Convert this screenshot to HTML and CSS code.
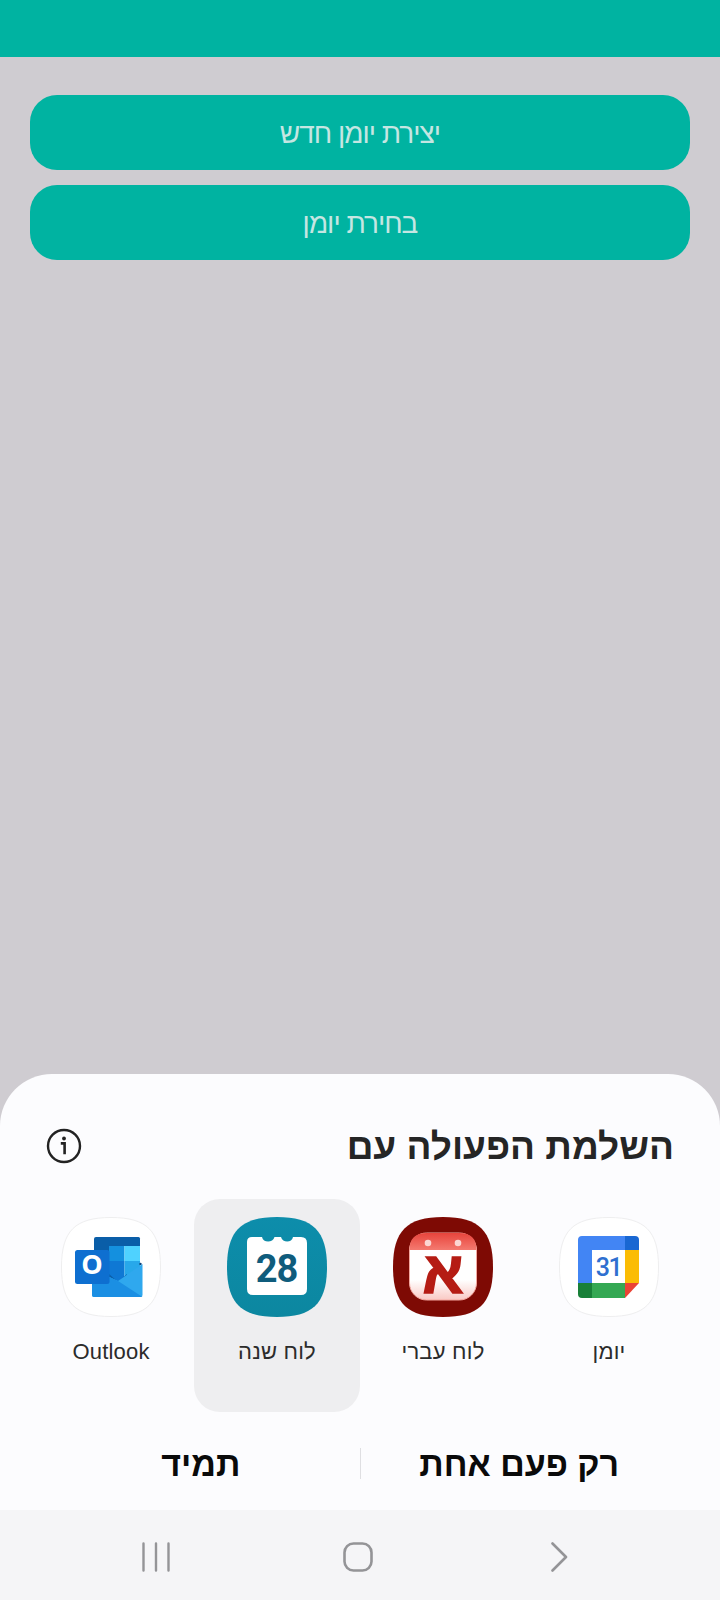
FILE: index.html
```html
<!DOCTYPE html>
<html lang="he" dir="rtl">
<head>
<meta charset="utf-8">
<title>השלמת הפעולה עם</title>
<link rel="stylesheet" href="styles.css">
</head>
<body>
<div class="screen">
  <header class="topbar"></header>
  <main class="content">
    <button class="action">יצירת יומן חדש</button>
    <button class="action">בחירת יומן</button>
  </main>
  <section class="sheet">
    <div class="sheet-head">
      <h1 class="title">השלמת הפעולה עם</h1>
      <svg class="info" viewBox="0 0 36 36" aria-hidden="true">
        <circle cx="18" cy="18" r="16" fill="none" stroke="#222" stroke-width="2.4"/>
        <circle cx="18" cy="10.5" r="1.9" fill="#222"/>
        <path d="M14.8 15.4H18.6V26.2" fill="none" stroke="#222" stroke-width="2.6"/>
      </svg>
    </div>
    <div class="apps">
      <div class="app">
        <svg class="icon" viewBox="0 0 100 100" aria-hidden="true">
          <path class="squircle-white" d="M50 .5C86 .5 99.500 14 99.500 50S86 99.500 50 99.500 .5 86 .5 50 14 .5 50 .5Z"/>
          <path fill="#4285f4" d="M23 19H66V33H33V66H19V23Q19 19 23 19Z"/>
          <path fill="#fff" d="M33 33H66V66H33Z"/>
          <path fill="#1967d2" d="M66 19H76Q80 19 80 23V33H66Z"/>
          <path fill="#fbbc04" d="M66 33H80V66H66Z"/>
          <path fill="#34a853" d="M33 66H66V81H33Z"/>
          <path fill="#188038" d="M19 66H33V81H23Q19 81 19 77Z"/>
          <path fill="#ea4335" d="M66 66H80L66 81Z"/>
          <text class="num31" x="49.500" y="58.500" text-anchor="middle" direction="ltr">31</text>
        </svg>
        <span class="label">יומן</span>
      </div>
      <div class="app">
        <svg class="icon" viewBox="0 0 100 100" aria-hidden="true">
          <defs>
            <linearGradient id="redTop" x1="0" y1="0" x2="0" y2="1">
              <stop offset="0" stop-color="#e8443c"/>
              <stop offset="1" stop-color="#f47a70"/>
            </linearGradient>
            <linearGradient id="paper" x1="0" y1="0" x2="0" y2="1">
              <stop offset="0" stop-color="#fff"/>
              <stop offset=".7" stop-color="#fff"/>
              <stop offset="1" stop-color="#f9c9c4"/>
            </linearGradient>
          </defs>
          <path fill="#7e0a04" d="M50 0C86 0 100 14 100 50S86 100 50 100 0 86 0 50 14 0 50 0Z"/>
          <rect class="paper" x="16.500" y="16" width="67" height="67" rx="17" fill="url(#paper)"/>
          <path fill="url(#redTop)" d="M33.500 16H66.500Q83.500 16 83.500 33H16.500Q16.500 16 33.500 16Z"/>
          <circle cx="35" cy="26" r="3.300" fill="#fbd6d2"/>
          <circle cx="65" cy="26" r="3.300" fill="#fbd6d2"/>
          <text class="aleph" x="50" y="76" text-anchor="middle">א</text>
        </svg>
        <span class="label">לוח עברי</span>
      </div>
      <div class="app selected">
        <svg class="icon" viewBox="0 0 100 100" aria-hidden="true">
          <defs>
            <linearGradient id="teal" x1="0" y1="0" x2="0" y2="1">
              <stop offset="0" stop-color="#0d8dab"/>
              <stop offset="1" stop-color="#0c87a0"/>
            </linearGradient>
          </defs>
          <path fill="url(#teal)" d="M50 0C86 0 100 14 100 50S86 100 50 100 0 86 0 50 14 0 50 0Z"/>
          <path fill="#fff" d="M25 20H35C36 26 46 26 47.500 20H54C55.500 26 65 26 66 20H74Q80 20 80 26V72Q80 78 74 78H26Q20 78 20 72V25Q20 20 25 20Z"/>
          <text class="num28" x="49.500" y="64.500" text-anchor="middle" direction="ltr">28</text>
        </svg>
        <span class="label">לוח שנה</span>
      </div>
      <div class="app">
        <svg class="icon" viewBox="0 0 100 100" aria-hidden="true">
          <path class="squircle-white" d="M50 .5C86 .5 99.500 14 99.500 50S86 99.500 50 99.500 .5 86 .5 50 14 .5 50 .5Z"/>
          <path fill="#0a5ea8" d="M35 20H77.500Q79 20 79 21.500V29H33V22Q33 20 35 20Z"/>
          <path fill="#0a5ea8" d="M33 29H48V70H33Z"/>
          <path fill="#1490df" d="M48 29H63.500V44H48Z"/>
          <path fill="#4fd2ff" d="M63.500 29H79V44H63.500Z"/>
          <path fill="#0f78d4" d="M48 44H63.500V70H48Z"/>
          <path fill="#28a8ea" d="M63.500 44H79V70H63.500Z"/>
          <path fill="#0a5ea8" d="M48 57L57 65 66 57V70H48Z"/>
          <circle cx="79.500" cy="47" r="1.200" fill="#0a3f78"/>
          <path fill="#2fa8ee" d="M57 64L81.500 47V78Q81.500 80 79.500 80H33Q31 80 31 78V52Z"/>
          <path fill="#1b8fe3" d="M31 52L57 64 81.500 80H33Q31 80 31 78Z"/>
          <rect x="14" y="33" width="34.500" height="34" rx="2.500" fill="#0e6fd0"/>
          <text class="letterO" x="31" y="57" text-anchor="middle" direction="ltr">O</text>
        </svg>
        <span class="label">Outlook</span>
      </div>
    </div>
    <div class="choices">
      <button class="choice">רק פעם אחת</button>
      <span class="divider"></span>
      <button class="choice">תמיד</button>
    </div>
  </section>
  <nav class="navbar" dir="ltr">
    <svg class="nav-icon" viewBox="0 0 32 30" aria-hidden="true">
      <path d="M3.500 1.500V28.500M16 1.500V28.500M28.500 1.500V28.500" fill="none" stroke="#949497" stroke-width="2.400" stroke-linecap="round"/>
    </svg>
    <svg class="nav-icon" viewBox="0 0 32 30" aria-hidden="true">
      <rect x="2.500" y="1.500" width="27" height="27" rx="9" fill="none" stroke="#949497" stroke-width="2.600"/>
    </svg>
    <svg class="nav-icon" viewBox="0 0 32 30" aria-hidden="true">
      <path d="M8.500 1.500L22 15 8.500 28.500" fill="none" stroke="#949497" stroke-width="2.600" stroke-linecap="round" stroke-linejoin="round"/>
    </svg>
  </nav>
</div>
</body>
</html>
```

FILE: styles.css
```css
* { box-sizing: border-box; }
html, body { margin: 0; padding: 0; }
body { font-family: "Liberation Sans", "DejaVu Sans", sans-serif; background: #cfccd1; }
.screen { width: 720px; height: 1600px; display: flex; flex-direction: column; overflow: hidden; background: #cfccd1; }
.topbar { height: 57px; flex: none; background: #00b3a1; }
.content { flex: 1; display: flex; flex-direction: column; gap: 15px; padding: 38px 30px 0; }
.action {
  height: 75px; border: 0; border-radius: 27px; background: #00b3a1;
  color: #c5e6e2; font: 400 28px/1 "Liberation Sans", sans-serif; letter-spacing: -1px; padding: 3px 0 0;
}
.sheet { height: 436px; flex: none; background: #fcfcfe; border-radius: 52px 52px 0 0; display: flex; flex-direction: column; }
.sheet-head { height: 125px; flex: none; display: flex; justify-content: space-between; align-items: center; padding: 18px 46px 0 46px; }
.title { margin: 0; padding-top: 2px; font: 700 37px/1 "Liberation Sans", sans-serif; color: #252525; }
.info { width: 36px; height: 36px; display: block; }
.apps { display: flex; flex: none; height: 213px; padding: 0 28px; }
.app { width: 166px; display: flex; flex-direction: column; align-items: center; padding-top: 18px; border-radius: 26px; }
.selected { background: #eeeef0; }
.icon { width: 100px; height: 100px; display: block; flex: none; }
.squircle-white { fill: #fff; stroke: #eeeeef; stroke-width: 1; }
.paper { stroke: #f4a8a0; stroke-width: 1; }
.label { margin-top: 22px; font: 400 22px/1.2 "Liberation Sans", sans-serif; letter-spacing: .2px; color: #2b2b2b; }
.num31 { font: 500 25px "Roboto", sans-serif; letter-spacing: -1.5px; fill: #2f6fd0; }
.num28 { font: 700 38px "Roboto", sans-serif; letter-spacing: -1px; fill: #0f5c7c; }
.aleph { font: 700 60px "Liberation Sans", sans-serif; fill: #b51c14; stroke: #b51c14; stroke-width: 1.6; }
.letterO { font: 700 27px "Open Sans", sans-serif; fill: #fff; }
.choices { flex: 1; display: flex; align-items: center; justify-content: center; padding: 5px 42px 0; }
.choice { flex: 1; border: 0; background: none; padding: 0; color: #0a0a0a; font: 700 34px/1 "Liberation Sans", sans-serif; }
.divider { width: 1px; height: 31px; background: #dfdfe2; flex: none; }
.navbar { height: 90px; flex: none; background: #f5f5f7; display: flex; padding: 32px 0 0 140px; align-items: flex-start; gap: 170px; }
.nav-icon { width: 32px; height: 30px; display: block; flex: none; }
```
